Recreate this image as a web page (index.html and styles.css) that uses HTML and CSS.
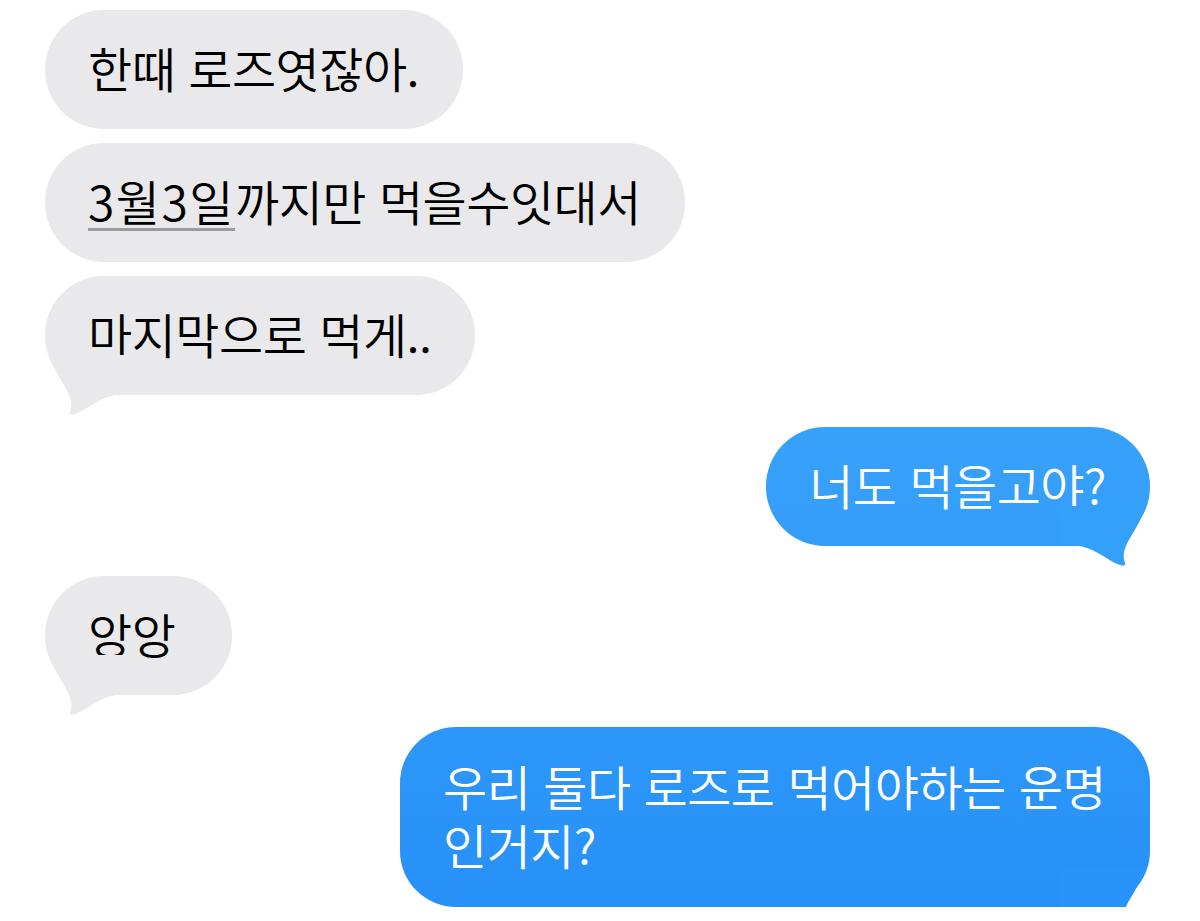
FILE: index.html
```html
<!DOCTYPE html>
<html lang="ko">
<head>
<meta charset="utf-8">
<title>Messages</title>
<link rel="stylesheet" href="styles.css">
</head>
<body>
<main class="thread">
  <div class="bubble them first">한때 로즈엿잖아.</div>
  <div class="bubble them cont"><span class="date">3월3일</span>까지만 먹을수잇대서</div>
  <div class="bubble them cont">마지막으로 먹게..
    <svg class="tail tail-left" viewBox="0 0 90 60" width="90" height="60" aria-hidden="true"><path d="M4,0 C8,12 14,22 20,32 C26,42 28,50 25,57 C24,60 27,60 30,59 C42,55 52,44 70,40 L90,40 L90,0 Z"/></svg>
  </div>
  <div class="bubble me group">너도 먹을고야?
    <svg class="tail tail-right tail-b1" viewBox="0 0 90 60" width="90" height="60" aria-hidden="true"><path d="M4,0 C8,12 14,22 20,32 C26,42 28,50 25,57 C24,60 27,60 30,59 C42,55 52,44 70,40 L90,40 L90,0 Z"/></svg>
  </div>
  <div class="bubble them group2 short">앙앙
    <svg class="tail tail-left" viewBox="0 0 90 60" width="90" height="60" aria-hidden="true"><path d="M4,0 C8,12 14,22 20,32 C26,42 28,50 25,57 C24,60 27,60 30,59 C42,55 52,44 70,40 L90,40 L90,0 Z"/></svg>
  </div>
  <div class="bubble me group two">우리 둘다 로즈로 먹어야하는 운명<br>인거지?
    <svg class="tail tail-right tail-b2" viewBox="0 0 90 60" width="90" height="60" aria-hidden="true"><path d="M4,0 C8,12 14,22 20,32 C26,42 28,50 25,57 C24,60 27,60 30,59 C42,55 52,44 70,40 L90,40 L90,0 Z"/></svg>
  </div>
</main>
</body>
</html>
```
FILE: styles.css
```css
html, body {
  margin: 0;
  padding: 0;
  background: #ffffff;
}

body {
  font-family: "Noto Sans CJK KR", "Noto Sans", sans-serif;
  overflow: hidden;
}

.thread {
  display: flex;
  flex-direction: column;
  padding: 10px 50px 0 45px;
}

.bubble {
  position: relative;
  font-size: 48px;
  font-weight: 350;
  letter-spacing: -0.5px;
  line-height: 59px;
  padding: 28px 44px 32px 43px;
  border-radius: 59px;
  white-space: nowrap;
}

.bubble.first { margin-top: 0; }
.bubble.cont { margin-top: 14px; }
.bubble.group { margin-top: 32px; }
.bubble.group2 { margin-top: 30px; }

.them {
  align-self: flex-start;
  background: #e9e9eb;
  color: #000000;
}

.me {
  align-self: flex-end;
  color: #ffffff;
  background: linear-gradient(180deg, #46b0fc 0%, #2690f8 100%);
  background-attachment: fixed;
}

.short {
  padding-right: 57px;
}

.two {
  border-radius: 56px;
  padding-top: 29px;
  padding-bottom: 33px;
  padding-left: 43px;
}

.date {
  letter-spacing: 1.5px;
  text-decoration: underline;
  text-decoration-color: #9a9aa0;
  text-decoration-thickness: 3px;
  text-underline-offset: 7px;
}

.tail {
  position: absolute;
  bottom: -20px;
  z-index: 0;
  pointer-events: none;
}

.tail-left {
  left: 0;
  fill: #e9e9eb;
}

.tail-right {
  right: 0;
  transform: scaleX(-1);
}

.tail-b1 { fill: #34a0fa; }
.tail-b2 { fill: #2893f8; }
```
